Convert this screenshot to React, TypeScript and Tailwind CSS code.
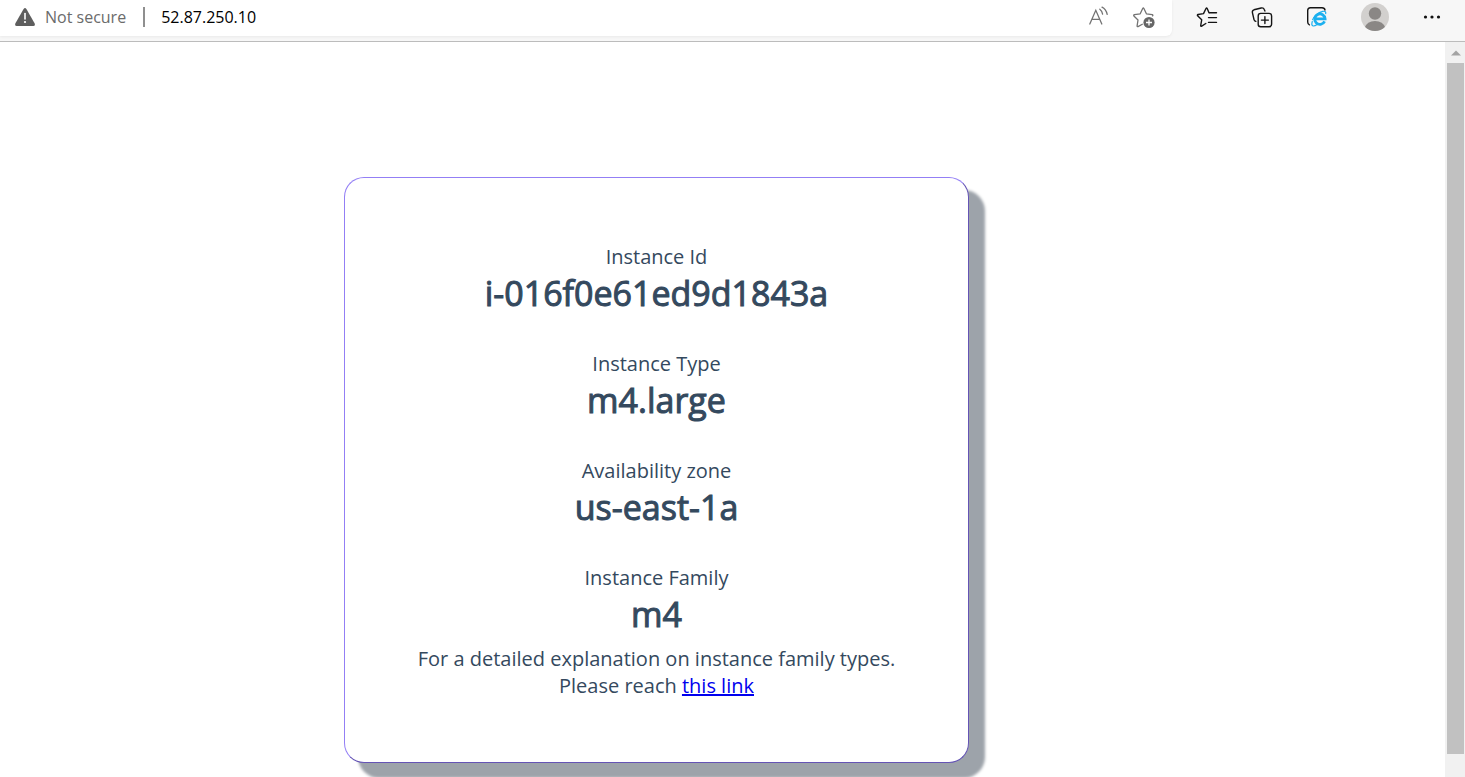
import type { ReactNode } from "react";

const details = [
  { label: "Instance Id", value: "i-016f0e61ed9d1843a" },
  { label: "Instance Type", value: "m4.large" },
  { label: "Availability zone", value: "us-east-1a" },
  { label: "Instance Family", value: "m4" },
];

function IconButton({ label, children }: { label: string; children: ReactNode }) {
  return (
    <button type="button" aria-label={label} className="flex size-7 shrink-0 items-center justify-center">
      {children}
    </button>
  );
}

function WarningIcon() {
  return (
    <svg width="20" height="18" viewBox="0 0 20 18" aria-hidden="true">
      <path d="M8.6 0.9Q10 -0.8 11.4 0.9L19.7 15.6Q20.4 18 18.3 18H1.7Q-0.4 18 0.3 15.6Z" fill="#5e5e5e" />
      <path d="M10 5.6v5.4" stroke="#fff" strokeWidth="1.6" strokeLinecap="round" />
      <circle cx="10" cy="14" r="1.1" fill="#fff" />
    </svg>
  );
}

function ReadAloudIcon() {
  return (
    <svg width="22" height="22" viewBox="0 0 22 22" fill="none" stroke="#737373" strokeWidth="1.3" strokeLinecap="round" aria-hidden="true">
      <path d="M2.8 18L8.8 4.3L14.8 18M4.8 13.4H12.8" />
      <path d="M12.8 3.2Q15.2 4.9 15.6 8.2M15 1.2Q19 3.2 20.2 8.4" />
    </svg>
  );
}

function AddFavoriteIcon() {
  return (
    <svg width="24" height="24" viewBox="0 0 24 24" fill="none" aria-hidden="true">
      <path
        d="M10.3 19.3L6 21.6Q5 22 5.1 20.8L6 15L1.9 11Q1.3 10 2.4 9.7L8.2 8.8L10.7 3.5Q11.3 2.5 11.9 3.5L14.4 8.8L20.2 9.7Q21.3 10 20.6 10.9"
        stroke="#737373"
        strokeWidth="1.3"
        strokeLinejoin="round"
        strokeLinecap="round"
      />
      <circle cx="17" cy="17.5" r="5.6" fill="#666" />
      <path d="M17 14.5v6M14 17.5h6" stroke="#fff" strokeWidth="1.3" />
    </svg>
  );
}

function FavoritesIcon() {
  return (
    <svg width="22" height="22" viewBox="0 0 22 22" fill="none" stroke="#151515" strokeWidth="1.4" strokeLinejoin="round" strokeLinecap="round" aria-hidden="true">
      <path d="M9.8 17.5L5.7 20.2Q4.6 20.7 4.7 19.5L5.7 13.8L1.6 9.8Q1 8.8 2.1 8.5L7.5 7.6L10 2.5Q10.6 1.5 11.2 2.5L13 6.8" />
      <path d="M13.5 6.8H20.5M12.5 11.6H20.5M12.5 16.4H20.5" />
    </svg>
  );
}

function CollectionsIcon() {
  return (
    <svg width="22" height="22" viewBox="0 0 22 22" fill="none" stroke="#151515" strokeWidth="1.4" strokeLinecap="round" aria-hidden="true">
      <path d="M4.8 15.4Q3.4 15 2.9 13.2L1.4 6.6Q1 4.4 3 3.8L10.2 2Q12.5 1.5 13.3 3.6L13.9 5" />
      <rect x="7.2" y="7.4" width="13.4" height="13.4" rx="2.5" />
      <path d="M13.9 10.6v7M10.4 14.1h7" />
    </svg>
  );
}

function ExplorerModeIcon() {
  return (
    <svg width="22" height="22" viewBox="0 0 22 22" fill="none" aria-hidden="true">
      <path d="M3.4 18.8Q1.7 18.3 1.7 16.1V4.5Q1.7 1.8 4.4 1.8H16Q18.6 1.8 19 4" stroke="#151515" strokeWidth="1.4" strokeLinecap="round" />
      <path d="M18.6 15.4A5.2 5.2 0 1 1 19.1 12.9H9.4" stroke="#1cb0ef" strokeWidth="2.8" />
      <path d="M6.4 14.2C7.4 10.6 12 6.5 16.7 5.4Q20.6 4.6 19.6 8.2M6.4 15.1Q4.9 19.7 7.2 20Q8.8 20.1 11.2 18.5" stroke="#1cb0ef" strokeWidth="1.2" />
    </svg>
  );
}

function ProfileIcon() {
  return (
    <svg width="28" height="28" viewBox="0 0 28 28" aria-hidden="true">
      <clipPath id="profile-disc">
        <circle cx="14" cy="14" r="14" />
      </clipPath>
      <circle cx="14" cy="14" r="14" fill="#d2d0ce" />
      <g clipPath="url(#profile-disc)" fill="#8a8785">
        <circle cx="14" cy="10.5" r="6.2" />
        <path d="M3.5 25Q6 18 14 18T24.5 25V28H3.5Z" />
      </g>
    </svg>
  );
}

function Toolbar() {
  return (
    <header className="flex h-[42px] shrink-0 items-start border-b border-[#bcbcbc] bg-[#f7f7f7]">
      <div className="flex h-9 flex-1 items-center rounded-br-md bg-white pr-3.5 pb-0.5 pl-[15px] shadow-[0_1px_3px_rgba(0,0,0,0.06)]">
        <WarningIcon />
        <span className="ml-2.5 text-base leading-6 text-[#6b6b6b]">Not secure</span>
        <span className="ml-[17px] h-5 w-0.5 bg-[#8f8f8f]" />
        <input
          aria-label="Address"
          defaultValue="52.87.250.10"
          className="ml-4 min-w-0 flex-1 bg-transparent text-base leading-6 text-black outline-none"
        />
        <div className="flex gap-[18px]">
          <IconButton label="Read aloud"><ReadAloudIcon /></IconButton>
          <IconButton label="Add this page to favorites"><AddFavoriteIcon /></IconButton>
        </div>
      </div>
      <nav aria-label="Browser tools" className="flex h-[34px] items-center gap-[27px] pr-[19px] pl-[21px]">
        <IconButton label="Favorites"><FavoritesIcon /></IconButton>
        <IconButton label="Collections"><CollectionsIcon /></IconButton>
        <IconButton label="Internet Explorer mode"><ExplorerModeIcon /></IconButton>
        <div className="flex gap-[29px] pl-[3px]">
          <IconButton label="Profile"><ProfileIcon /></IconButton>
          <IconButton label="Settings and more">
            <svg width="18" height="4" viewBox="0 0 18 4" fill="#111" aria-hidden="true">
              <circle cx="2.5" cy="2" r="1.6" />
              <circle cx="9" cy="2" r="1.6" />
              <circle cx="15.5" cy="2" r="1.6" />
            </svg>
          </IconButton>
        </div>
      </nav>
    </header>
  );
}

function InstanceCard() {
  return (
    <section className="w-full max-w-[625px] rounded-[20px] border border-t-[#937ff5] border-r-[#6554b5] border-b-[#6554b5] border-l-[#937ff5] bg-white px-16 pt-[65px] pb-[63px] text-center text-xl leading-[27px] font-normal text-[#34495e] shadow-[15px_14px_3px_1px_#9da3aa]">
      <dl className="flex flex-col gap-[34px]">
        {details.map(({ label, value }) => (
          <div key={label}>
            <dt>{label}</dt>
            <dd className="text-[34px] leading-[46px] [-webkit-text-stroke:1px_currentColor]">{value}</dd>
          </div>
        ))}
      </dl>
      <p className="mt-2">
        For a detailed explanation on instance family types.
        <br />
        Please reach{" "}
        <a href="#instance-types" className="text-[#0000ee] underline">this link</a>
      </p>
    </section>
  );
}

function Scrollbar() {
  return (
    <div aria-hidden="true" className="flex w-5 shrink-0 flex-col bg-[#f1f1f1] pr-px pb-[23px] pl-0.5">
      <div className="flex h-[21px] items-center justify-center">
        <svg width="10" height="6" viewBox="0 0 10 6">
          <path d="M0 5.5L5 0.5L10 5.5Z" fill="#a3a3a3" />
        </svg>
      </div>
      <div className="flex-1 bg-[#c1c1c1]" />
    </div>
  );
}

export default function App() {
  return (
    <div className="flex min-h-screen flex-col overflow-hidden bg-white font-['Open_Sans','Noto_Sans',sans-serif]">
      <Toolbar />
      <div className="flex flex-1">
        <main className="flex flex-1 items-start justify-center pt-[135px] pr-[132px] pb-3.5">
          <InstanceCard />
        </main>
        <Scrollbar />
      </div>
    </div>
  );
}
